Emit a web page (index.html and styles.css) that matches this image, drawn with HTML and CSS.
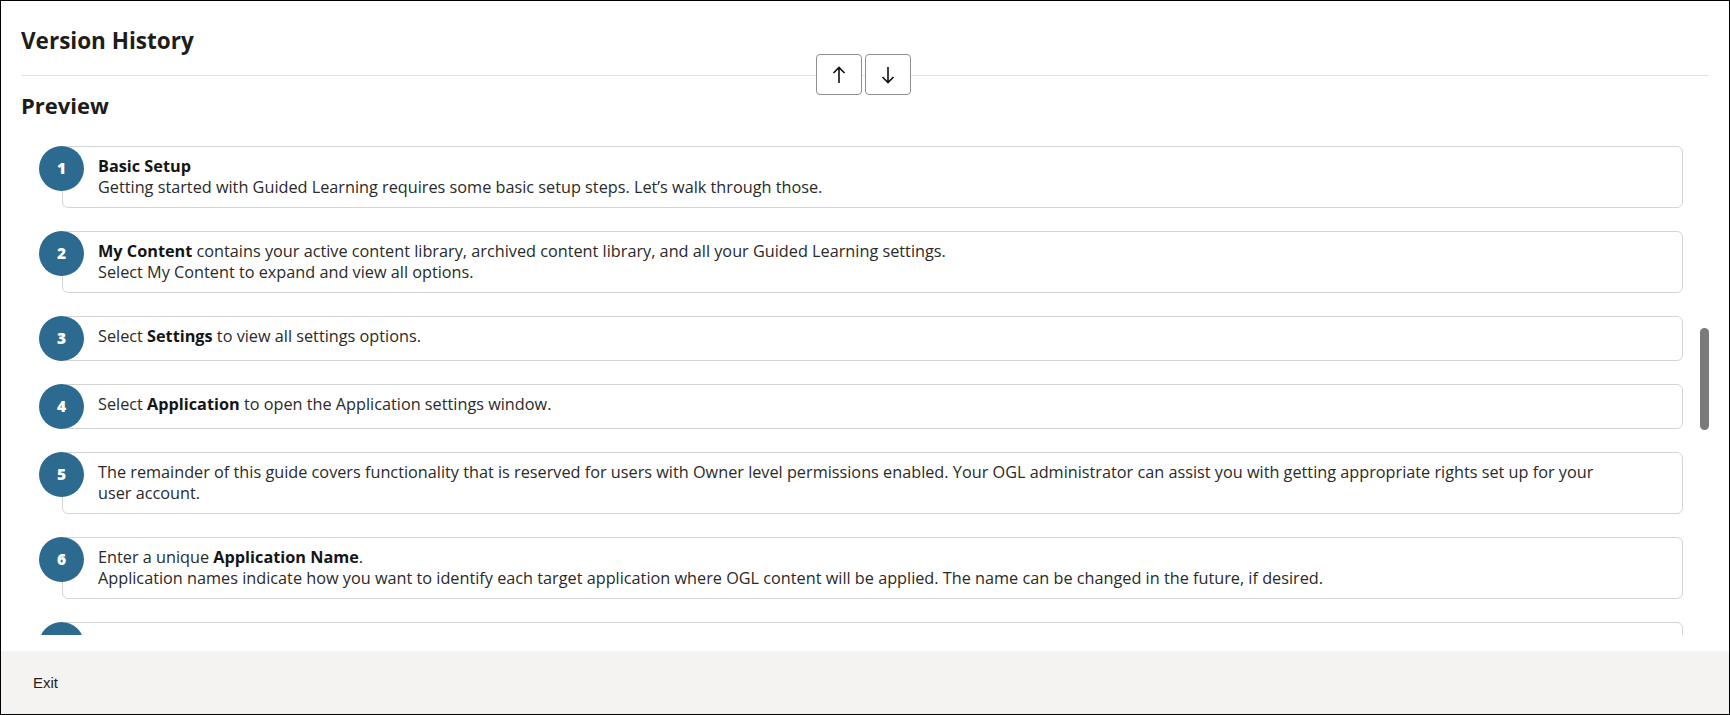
FILE: index.html
```html
<!DOCTYPE html>
<html lang="en">
<head>
<meta charset="utf-8">
<title>Version History</title>
<link rel="stylesheet" href="styles.css">
</head>
<body>
<div class="modal">
  <div class="main">
    <header class="header">
      <h1 class="title">Version History</h1>
    </header>
    <div class="nav">
      <button class="nav-btn" aria-label="Previous">
        <svg width="14" height="18" viewBox="0 0 14 18"><path d="M7 1.5V17M1.5 7L7 1.5L12.5 7" fill="none" stroke="#111" stroke-width="1.6"/></svg>
      </button>
      <button class="nav-btn" aria-label="Next">
        <svg width="14" height="18" viewBox="0 0 14 18"><path d="M7 16.5V1M1.5 11L7 16.5L12.5 11" fill="none" stroke="#111" stroke-width="1.6"/></svg>
      </button>
    </div>
    <h2 class="subtitle">Preview</h2>
    <div class="list">
      <div class="item"><span class="num">1</span><b>Basic Setup</b><br>Getting started with Guided Learning requires some basic setup steps. Let’s walk through those.</div>
      <div class="item"><span class="num">2</span><b>My Content</b> contains your active content library, archived content library, and all your Guided Learning settings.<br>Select My Content to expand and view all options.</div>
      <div class="item"><span class="num">3</span>Select <b>Settings</b> to view all settings options.</div>
      <div class="item"><span class="num">4</span>Select <b>Application</b> to open the Application settings window.</div>
      <div class="item"><span class="num">5</span>The remainder of this guide covers functionality that is reserved for users with Owner level permissions enabled. Your OGL administrator can assist you with getting appropriate rights set up for your<br>user account.</div>
      <div class="item"><span class="num">6</span>Enter a unique <b>Application Name</b>.<br>Application names indicate how you want to identify each target application where OGL content will be applied. The name can be changed in the future, if desired.</div>
      <div class="item"><span class="num">7</span>Select the <b>Add New</b> icon to add a new application URL to the list of Application URLs and define its settings.</div>
    </div>
    <div class="thumb"></div>
  </div>
  <footer class="footer">
    <button class="exit">Exit</button>
  </footer>
</div>
</body>
</html>
```

FILE: styles.css
```css
* { box-sizing: border-box; }
html, body { margin: 0; padding: 0; background: #fff; }
body { font-family: "Open Sans", "Noto Sans", sans-serif; color: #161513; }

.modal {
  width: 1730px;
  height: 715px;
  border: 1px solid #000;
  display: flex;
  flex-direction: column;
  background: #fff;
}

.main {
  position: relative;
  flex: 1;
  min-height: 0;
  display: flex;
  flex-direction: column;
  padding: 0 21px 16px 20px;
}

.header {
  padding: 26px 0 20px;
  border-bottom: 1px solid #e2e2e2;
}

.title {
  margin: 0;
  font-size: 22.5px;
  line-height: 28px;
  font-weight: 700;
  color: #1d1d1b;
}

.nav {
  position: absolute;
  left: 815px;
  top: 53px;
  display: flex;
  gap: 3px;
}

.nav-btn {
  width: 46px;
  height: 41px;
  padding: 0;
  border: 1px solid #8f8f8f;
  border-radius: 4px;
  background: #fff;
  display: flex;
  align-items: center;
  justify-content: center;
}

.subtitle {
  margin: 16px 0 0;
  font-size: 22px;
  line-height: 26px;
  font-weight: 700;
  color: #1d1d1b;
}

.list {
  flex: 1;
  min-height: 0;
  overflow: hidden;
  margin-top: 28px;
}

.item {
  position: relative;
  margin: 0 25px 23px 41px;
  min-height: 45px;
  padding: 9px 16px 9px 35px;
  border: 1px solid #d4d4d4;
  border-radius: 6px;
  font-size: 16.25px;
  line-height: 21px;
  color: #2a2a28;
}

.item b { font-weight: 700; color: #161513; }

.num {
  position: absolute;
  left: -24px;
  top: -1px;
  width: 45px;
  height: 45px;
  border-radius: 50%;
  background: #2c6b8f;
  color: #fff;
  font-weight: 800;
  font-size: 15.5px;
  display: flex;
  align-items: center;
  justify-content: center;
}

.thumb {
  position: absolute;
  left: 1699px;
  top: 327px;
  width: 9px;
  height: 102px;
  border-radius: 5px;
  background: #7b7b7b;
}

.footer {
  height: 63px;
  background: #f4f3f1;
  display: flex;
  align-items: center;
  padding-left: 32px;
}

.exit {
  border: 0;
  background: transparent;
  padding: 0;
  font-family: "Liberation Sans", Arial, sans-serif;
  font-size: 15px;
  color: #1f1f1f;
}
```
